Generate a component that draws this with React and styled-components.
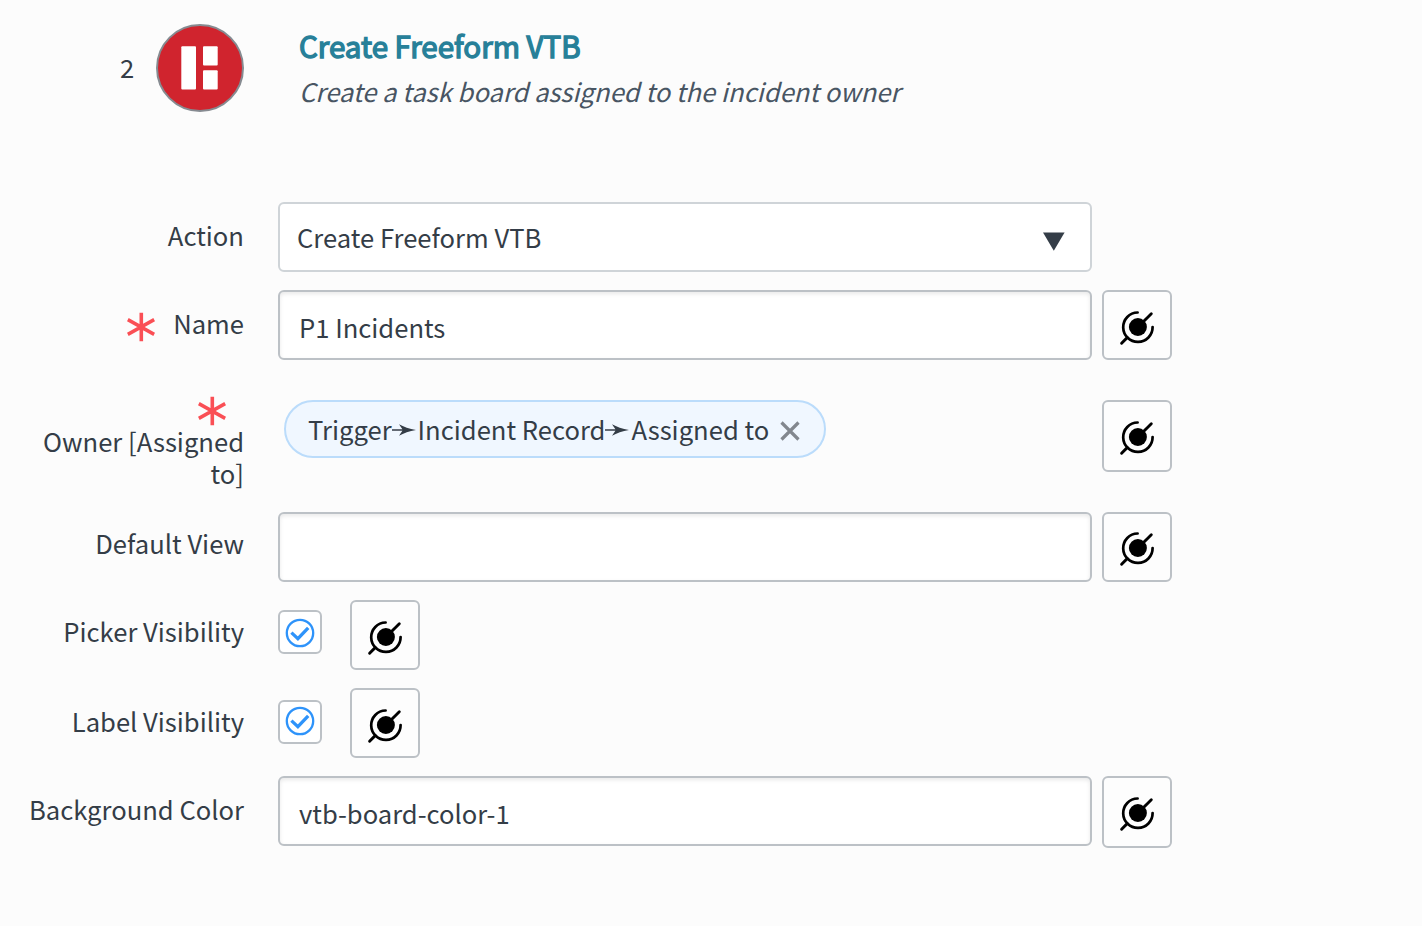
import React from 'react';
import styled, { createGlobalStyle } from 'styled-components';

const Global = createGlobalStyle`
  * { box-sizing: border-box; }
  body {
    margin: 0;
    background: #fcfcfc;
    color: #343d47;
    font-family: 'Noto Sans CJK SC', 'Open Sans', sans-serif;
    font-size: 25.6px;
    line-height: 32px;
  }
`;

const Page = styled.main`
  width: 1422px;
  height: 926px;
  overflow: hidden;
  background: #fcfcfc;
`;

const Header = styled.header`
  display: flex;
  height: 202px;
  padding: 24px 0 0 120px;
`;

const StepNumber = styled.span`
  width: 36px;
  padding-top: 27px;
`;

const StepIcon = styled.div`
  width: 88px;
  height: 88px;
  svg { display: block; }
`;

const Heading = styled.div`
  margin-left: 55px;
  white-space: nowrap;
`;

const Title = styled.h1`
  margin: 3px 0 0;
  font-size: 29.5px;
  line-height: 36px;
  font-weight: 400;
  -webkit-text-stroke: 1.4px #278099;
  color: #278099;
`;

const Subtitle = styled.p`
  margin: 12px 0 0;
  font-style: italic;
  color: #485563;
`;

const Row = styled.div`
  display: flex;
  align-items: flex-start;
  height: ${(p) => p.$height}px;
`;

const Label = styled.div`
  display: flex;
  flex-wrap: wrap;
  justify-content: flex-end;
  flex: none;
  width: 244px;
  margin-right: 34px;
  padding: ${(p) => p.$top ?? 17}px 0 0 24px;
  text-align: right;
`;

const Required = styled.svg`
  flex: none;
  width: 28px;
  height: 30px;
  margin: ${(p) => p.$margin};
`;

const Field = styled.div`
  display: flex;
  flex: none;
  width: 814px;
  height: 70px;
  padding: ${(p) => (p.$select ? '17px 25px 0 17px' : '19px 19px 0')};
  justify-content: space-between;
  border: 2px solid ${(p) => (p.$select ? '#cfd4d8' : '#bcc1c6')};
  border-radius: 6px;
  background: #fff;
  box-shadow: ${(p) => (p.$select ? 'none' : 'inset 0 2px 4px rgba(0, 0, 0, 0.09)')};
`;

const Caret = styled.svg`
  width: 22px;
  height: 19px;
  margin-top: 11px;
`;

const PillButton = styled.button`
  display: flex;
  flex: none;
  width: 70px;
  height: ${(p) => p.$height ?? 70}px;
  margin-left: ${(p) => p.$gap ?? 10}px;
  margin-top: ${(p) => p.$top ?? 0}px;
  padding: ${(p) => p.$iconTop ?? 17}px 0 0 15px;
  border: 2px solid #bcc1c6;
  border-radius: 6px;
  background: #fdfdfd;
  svg { display: block; }
`;

const PillArea = styled.div`
  flex: none;
  width: 814px;
  padding: 7px 6px 0;
`;

const Pill = styled.div`
  display: flex;
  width: 542px;
  height: 58px;
  padding: 11px 0 0 22px;
  border: 2px solid #bbdcfb;
  border-radius: 29px;
  background: #f0f7ff;
  white-space: nowrap;
`;

const Arrow = styled.svg`
  flex: none;
  width: 24px;
  height: 12px;
  margin: 11px 2px 0 0;
`;

const Close = styled.svg`
  width: 20px;
  height: 20px;
  margin: 8px 0 0 11px;
`;

const Checkbox = styled.div`
  flex: none;
  width: 44px;
  height: 44px;
  margin-top: ${(p) => p.$top}px;
  padding: ${(p) => p.$inset ?? 6}px 0 0 5px;
  border: 2px solid #bcc1c6;
  border-radius: 6px;
  background: #fff;
  svg { display: block; }
`;

const DataButton = (props) => (
  <PillButton aria-label="Data pill picker" {...props}>
    <svg width="38" height="38" viewBox="0 0 38 38" fill="none" stroke="#000" strokeLinecap="round">
      <circle cx="18.9" cy="18" r="9" fill="#000" stroke="none" />
      <path d="M18.6 3.5A14.7 14.7 0 1 0 33.6 18" strokeWidth="2.7" />
      <path d="M22 15L32.3 4.8M8.2 28.6L2.6 34.2" strokeWidth="2.9" />
    </svg>
  </PillButton>
);

const Asterisk = ({ margin }) => (
  <Required viewBox="0 0 28 30" $margin={margin} stroke="#fa4f55" strokeWidth="3.6">
    <path d="M14.3 .7V29.3M.8 7.7L27.2 22.3M27.2 7.7L.8 22.3" />
  </Required>
);

const Check = (props) => (
  <Checkbox role="checkbox" aria-checked="true" {...props}>
    <svg width="30" height="30" viewBox="0 0 30 30" fill="none" stroke="#2e93fa">
      <circle cx="15" cy="15" r="13.2" strokeWidth="2.3" />
      <path d="M6.4 14.6L12.9 20.6L23.2 9.8" strokeWidth="3.3" />
    </svg>
  </Checkbox>
);

const PathArrow = () => (
  <Arrow viewBox="0 0 24 12" fill="#343d47">
    <path d="M0 5.3H10.4L7 .3Q14 4.2 24 6Q14 7.8 7 11.7L10.4 6.7H0Z" />
  </Arrow>
);

export default function App() {
  return (
    <Page>
      <Global />
      <Header>
        <StepNumber>2</StepNumber>
        <StepIcon>
          <svg width="88" height="88" viewBox="0 0 88 88">
            <circle cx="44" cy="44" r="43" fill="#d0242e" stroke="#868b91" strokeWidth="2" />
            <g fill="#fff">
              <rect x="25.3" y="22.3" width="14.7" height="43.2" rx="1" />
              <rect x="47" y="22.3" width="14.7" height="19.2" rx="1" />
              <rect x="47" y="46.2" width="14.7" height="19.3" rx="1" />
            </g>
          </svg>
        </StepIcon>
        <Heading>
          <Title>Create Freeform VTB</Title>
          <Subtitle>Create a task board assigned to the incident owner</Subtitle>
        </Heading>
      </Header>
      <Row $height={88}>
        <Label>Action</Label>
        <Field $select>
          <span>Create Freeform VTB</span>
          <Caret viewBox="0 0 22 19"><path d="M0 .4H21.6L10.8 18.8Z" fill="#343d47" /></Caret>
        </Field>
      </Row>
      <Row $height={103}>
        <Label><Asterisk margin="5px 18px 0 0" />Name</Label>
        <Field>P1 Incidents</Field>
        <DataButton />
      </Row>
      <Row $height={119}>
        <Label $top={3}><Asterisk margin="0 18px -1px 0" />Owner [Assigned to]</Label>
        <PillArea>
          <Pill>
            <span>Trigger</span>
            <PathArrow />
            <span>Incident Record</span>
            <PathArrow />
            <span>Assigned to</span>
            <Close viewBox="0 0 20 20" stroke="#82878e" strokeWidth="3.2"><path d="M1.5 1.5L18.5 18.5M18.5 1.5L1.5 18.5" /></Close>
          </Pill>
        </PillArea>
        <DataButton $height={72} $top={7} />
      </Row>
      <Row $height={88}>
        <Label $top={15}>Default View</Label>
        <Field />
        <DataButton $iconTop={16} />
      </Row>
      <Row $height={88}>
        <Label $top={15}>Picker Visibility</Label>
        <Check $top={10} />
        <DataButton $gap={28} />
      </Row>
      <Row $height={88}>
        <Label>Label Visibility</Label>
        <Check $top={12} $inset={4} />
        <DataButton $gap={28} />
      </Row>
      <Row $height={88}>
        <Label>Background Color</Label>
        <Field>vtb-board-color-1</Field>
        <DataButton $height={72} />
      </Row>
    </Page>
  );
}
